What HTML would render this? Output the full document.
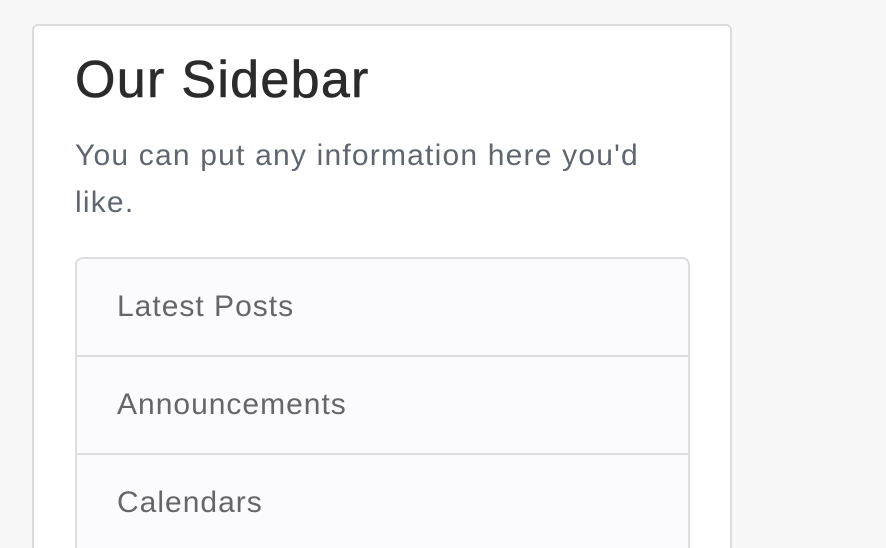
<!DOCTYPE html>
<html><head><style>
html,body{margin:0;padding:0;background:#f7f7f7;width:886px;height:548px;overflow:hidden;font-family:"Liberation Sans",Arial,sans-serif;}
.wrap{position:relative;width:886px;height:548px;overflow:hidden;}
.card{position:absolute;left:32px;top:24px;width:696px;height:522px;background:#fff;border:2px solid #dcdcdc;border-bottom:none;border-radius:6px 6px 0 0;}
h1{position:absolute;left:41px;top:24px;margin:0;font-size:52px;font-weight:500;color:#2b2b2b;line-height:60px;letter-spacing:1.3px;-webkit-text-stroke:0.6px #2b2b2b;}
p{position:absolute;left:41px;top:106px;width:590px;margin:0;font-size:30px;line-height:47px;color:#5f6670;letter-spacing:1.2px;}
.list{position:absolute;left:41px;top:231px;width:611px;height:291px;border:2px solid #dedede;border-bottom:none;border-radius:8px 8px 0 0;background:#fbfbfd;overflow:hidden;}
.item{height:96px;border-bottom:2px solid #dedede;font-size:30px;color:#666;line-height:96px;padding-left:40px;letter-spacing:1px;}
</style></head><body>
<div class="wrap">
<div class="card">
<h1>Our Sidebar</h1>
<p>You can put any information here you'd like.</p>
<div class="list">
<div class="item">Latest Posts</div>
<div class="item">Announcements</div>
<div class="item">Calendars</div>
</div>
</div>
</div>
</body></html>
